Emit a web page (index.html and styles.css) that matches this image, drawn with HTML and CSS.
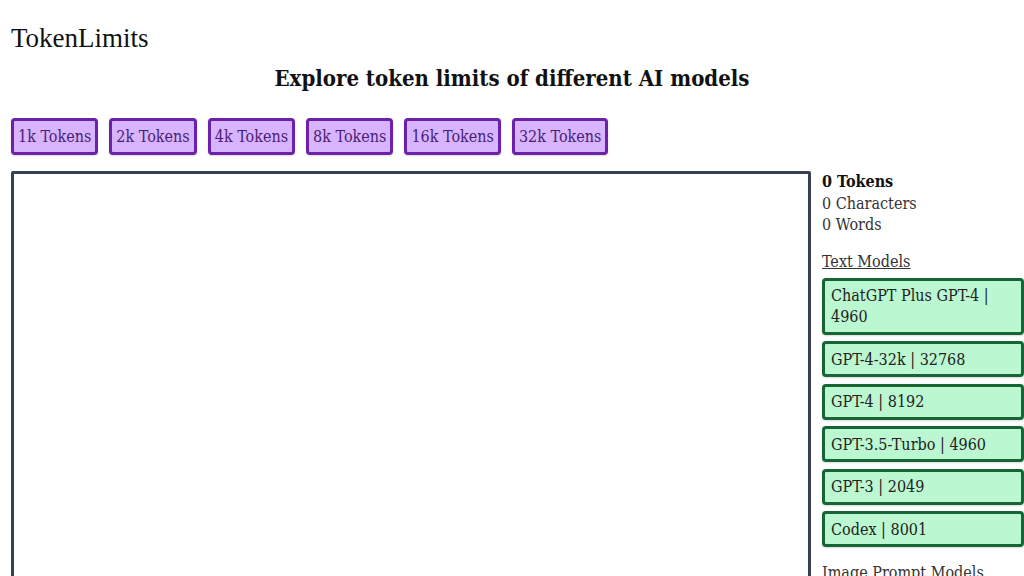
FILE: index.html
```html
<!DOCTYPE html>
<html>
<head>
<meta charset="utf-8">
<link rel="stylesheet" href="styles.css">
</head>
<body>
<div class="page">
  <div class="brand">TokenLimits</div>
  <h1 class="title">Explore token limits of different AI models</h1>
  <div class="presets">
    <button class="preset">1k Tokens</button>
    <button class="preset">2k Tokens</button>
    <button class="preset">4k Tokens</button>
    <button class="preset">8k Tokens</button>
    <button class="preset">16k Tokens</button>
    <button class="preset">32k Tokens</button>
  </div>
  <div class="main">
    <textarea class="editor"></textarea>
    <aside class="side">
      <div class="stats">
        <div class="stat-strong">0 Tokens</div>
        <div>0 Characters</div>
        <div>0 Words</div>
      </div>
      <div class="group-title">Text Models</div>
      <div class="models">
        <div class="model">ChatGPT Plus GPT-4 | 4960</div>
        <div class="model">GPT-4-32k | 32768</div>
        <div class="model">GPT-4 | 8192</div>
        <div class="model">GPT-3.5-Turbo | 4960</div>
        <div class="model">GPT-3 | 2049</div>
        <div class="model">Codex | 8001</div>
      </div>
      <div class="group-title">Image Prompt Models</div>
    </aside>
  </div>
</div>
</body>
</html>
```
FILE: styles.css
```css
html, body {
  margin: 0;
  padding: 0;
  background: #ffffff;
  overflow: hidden;
}
.page {
  padding: 22px 0 0 11px;
  font-family: "DejaVu Serif Condensed", "DejaVu Serif", serif;
  font-stretch: condensed;
  color: #111;
}
.brand {
  font-family: "Liberation Serif", serif;
  font-stretch: normal;
  font-size: 27px;
  line-height: 32px;
  color: #111;
}
.title {
  margin: 6px 0 0 0;
  text-align: center;
  font-size: 22px;
  line-height: 36px;
  font-weight: bold;
  padding-right: 11px;
}
.presets {
  display: flex;
  gap: 11px;
  margin-top: 22px;
}
.preset {
  font-family: inherit;
  font-stretch: condensed;
  font-size: 16px;
  color: #4a1d75;
  background: #d8b4fe;
  border: 3px solid #6b21a8;
  border-radius: 4px;
  height: 37px;
  padding: 0 4px;
  box-shadow: 0 1px 2px rgba(0,0,0,0.15);
}
.main {
  display: flex;
  gap: 11px;
  margin-top: 16px;
}
.editor {
  width: 800px;
  height: 430px;
  box-sizing: border-box;
  border: 3px solid #374151;
  border-radius: 2px;
  resize: none;
  margin: 0;
  flex: none;
}
.side {
  width: 202px;
  flex: none;
  font-size: 16px;
  color: #333;
}
.stats {
  line-height: 21.5px;
}
.stat-strong {
  font-weight: bold;
  color: #111;
}
.group-title {
  margin-top: 15px;
  text-decoration: underline;
  line-height: 22px;
  color: #333;
}
.models {
  display: flex;
  flex-direction: column;
  gap: 6.5px;
  margin-top: 5px;
}
.model {
  background: #bbf7d0;
  border: 3px solid #166534;
  border-radius: 4px;
  padding: 4.5px 6px;
  line-height: 21px;
  color: #222;
  box-shadow: 0 1px 2px rgba(0,0,0,0.15);
}
```
